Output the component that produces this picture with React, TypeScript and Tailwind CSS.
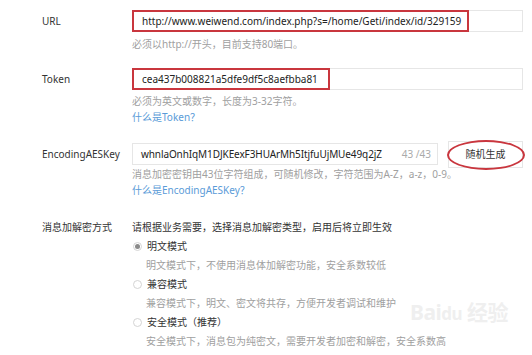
import React from "react";

const font = { fontFamily: '"Noto Sans", "Noto Sans CJK SC", sans-serif' };

function Label({ children }: { children: React.ReactNode }) {
  return <div className="w-[132px] shrink-0 pl-[42px] leading-[22px] text-[#333]">{children}</div>;
}

function Radio({ checked, label, note }: { checked?: boolean; label: string; note: string }) {
  return (
    <div>
      <div className="flex items-center h-[19px]">
        <span className="w-[9px] h-[9px] rounded-full border border-[#d4d4d4] ml-[1px] mr-[5px] flex items-center justify-center">
          {checked && <span className="w-[5px] h-[5px] rounded-full bg-[#8a8a8a]" />}
        </span>
        <span className="text-[#333]">{label}</span>
      </div>
      <div className="h-[19px] leading-[19px] pl-[14px] text-[#a0a0a0]">{note}</div>
    </div>
  );
}

export default function App() {
  return (
    <div className="relative w-[532px] h-[355px] overflow-hidden bg-white text-[10px] pt-[10px]" style={font}>
      {/* watermark */}
      <div className="absolute left-[410px] top-[302px] text-[#efefef] leading-none select-none">
        <div className="text-[21px] font-bold tracking-tight">Bai<span className="text-[17px]">du</span> 经验</div>
      </div>

      {/* URL */}
      <div className="relative flex">
        <Label>URL</Label>
        <div className="flex-1 pr-[9px]">
          <div className="h-[22px] border border-[#e6e6e6] flex items-center">
            <span className="h-[22px] -ml-[1px] border-2 border-[#c9363e] pl-[8px] pr-[6px] leading-[18px] text-[#222]">
              http://www.weiwend.com/index.php?s=/home/Geti/index/id/329159
            </span>
          </div>
          <div className="leading-[16px] mt-[4px] text-[#a0a0a0]">必须以http://开头，目前支持80端口。</div>
        </div>
      </div>

      {/* Token */}
      <div className="relative flex mt-[16px]">
        <Label>Token</Label>
        <div className="flex-1 pr-[9px]">
          <div className="h-[22px] border border-[#e6e6e6] flex items-center">
            <span className="h-[22px] -ml-[1px] border-2 border-[#c9363e] pl-[8px] pr-[10px] leading-[18px] text-[#222]">
              cea437b008821a5dfe9df5c8aefbba81
            </span>
          </div>
          <div className="leading-[16px] mt-[3px] text-[#a0a0a0]">必须为英文或数字，长度为3-32字符。</div>
          <div className="leading-[16px] text-[#5a9bd8]">什么是Token？</div>
        </div>
      </div>

      {/* EncodingAESKey */}
      <div className="relative flex mt-[18px]">
        <Label>EncodingAESKey</Label>
        <div className="flex-1 pr-[9px]">
          <div className="flex items-center h-[22px]">
            <div className="w-[306px] h-[22px] border border-[#e6e6e6] flex items-center justify-between pl-[8px] pr-[6px]">
              <span className="text-[#222] tracking-[-0.1px]">whnlaOnhIqM1DJKEexF3HUArMh5ItjfuUjMUe49q2jZ</span>
              <span className="text-[#aaa]">43 /43</span>
            </div>
            <div className="relative ml-[10px] w-[75px] h-[27px] shrink-0 border border-[#e6e6e6] flex items-center justify-center text-[#333]">
              随机生成
              <span className="absolute -left-[2px] -top-[2px] w-[78px] h-[30px] rounded-[50%] border-2 border-[#c9363e]" />
            </div>
          </div>
          <div className="leading-[16px] mt-[1px] text-[#a0a0a0]">
            消息加密密钥由43位字符组成，可随机修改，字符范围为A-Z，a-z，0-9。
          </div>
          <div className="leading-[16px] text-[#5a9bd8]">什么是EncodingAESKey？</div>
        </div>
      </div>

      {/* 消息加解密方式 */}
      <div className="relative flex mt-[20px]">
        <div className="w-[132px] shrink-0 pl-[42px] leading-[18px] text-[#333]">消息加解密方式</div>
        <div className="flex-1">
          <div className="leading-[18px] text-[#333]">请根据业务需要，选择消息加解密类型，启用后将立即生效</div>
          <div className="mt-[1px]">
            <Radio checked label="明文模式" note="明文模式下，不使用消息体加解密功能，安全系数较低" />
            <Radio label="兼容模式" note="兼容模式下，明文、密文将共存，方便开发者调试和维护" />
            <Radio label="安全模式（推荐）" note="安全模式下，消息包为纯密文，需要开发者加密和解密，安全系数高" />
          </div>
        </div>
      </div>
    </div>
  );
}
